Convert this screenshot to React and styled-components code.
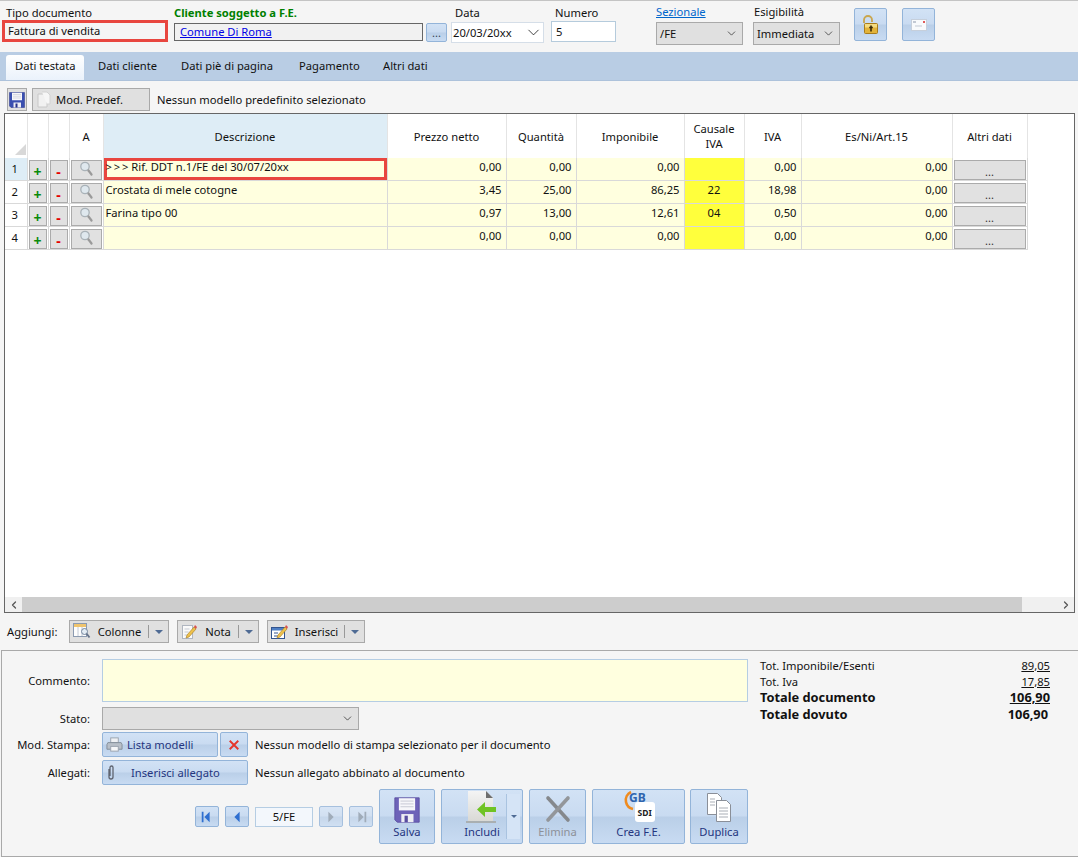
import React from "react";
import styled, { createGlobalStyle, css } from "styled-components";
import { ChevronDown, ChevronLeft, ChevronRight } from "lucide-react";

const GlobalStyle = createGlobalStyle`
  html, body {
    margin: 0;
    padding: 0;
    background: #f5f5f5;
  }
  body {
    font-family: "Noto Sans", "Liberation Sans", sans-serif;
    font-size: 11.2px;
    color: #111;
  }
  * { box-sizing: border-box; }
`;

const glass = css`
  background: linear-gradient(#d2e2f5 0%, #c9dbf1 48%, #bacfe8 52%, #c8dbf2 100%);
  border: 1px solid #93b4d9;
  border-radius: 2px;
`;

const Page = styled.div`
  width: 1078px;
  height: 857px;
  display: flex;
  flex-direction: column;
  border-top: 1px solid #c4c4c4;
  overflow: hidden;
`;

/* header */
const Header = styled.div`
  height: 51px;
  display: flex;
  align-items: flex-start;
  padding-left: 2px;
`;
const Field = styled.div`
  width: ${(p) => p.$w}px;
  margin-left: ${(p) => p.$ml || 0}px;
  padding-top: ${(p) => p.$pt ?? 5}px;
  display: flex;
  flex-direction: column;
`;
const FieldLabel = styled.div`
  height: 14px;
  line-height: 14px;
  padding-left: ${(p) => p.$pl || 0}px;
  margin-bottom: ${(p) => p.$mb || 0}px;
  white-space: nowrap;
  color: ${(p) => p.$color || "#111"};
  font-weight: ${(p) => (p.$bold ? 700 : 400)};
  ${(p) => p.$link && "text-decoration: underline;"}
`;
const MarkedBox = styled.div`
  height: 22px;
  border: 3px solid #e8463f;
  padding-left: 3px;
  line-height: 16px;
  background: #f5f5f5;
`;
const ClientRow = styled.div`
  display: flex;
  gap: 3px;
  margin-top: 3px;
`;
const ClientBox = styled.div`
  width: 249px;
  height: 18px;
  border: 1px solid #666;
  background: #f1f1f1;
  padding-left: 5px;
  line-height: 15px;
  color: #0000e6;
  text-decoration: underline;
`;
const DotsButton = styled.div`
  ${glass}
  width: 21px;
  height: 19px;
  text-align: center;
  line-height: 18px;
  color: #345;
`;
const DateBox = styled.div`
  height: 21px;
  margin-top: 2px;
  border: 1px solid #d5dee8;
  background: #fff;
  display: flex;
  align-items: center;
  justify-content: space-between;
  padding: 0 0 0 1px;
`;
const TextInput = styled.div`
  height: 21px;
  margin-top: 1px;
  border: 1px solid #b5cbdc;
  background: #fff;
  padding-left: 4px;
  line-height: 19px;
`;
const Select = styled.div`
  height: 23px;
  width: ${(p) => (p.$w ? p.$w + "px" : "auto")};
  border: 1px solid #a9a9a9;
  background: #e0e0e0;
  display: flex;
  align-items: center;
  justify-content: space-between;
  padding: 0 4px 0 3px;
`;
const SquareButton = styled.div`
  ${glass}
  width: 33px;
  height: 33px;
  margin-left: ${(p) => p.$ml}px;
  margin-top: 7px;
  display: flex;
  align-items: center;
  justify-content: center;
`;

/* tabs */
const TabBar = styled.div`
  height: 29px;
  flex: none;
  background: #b9cde4;
  border-bottom: 1px solid #adc2db;
  display: flex;
  align-items: flex-end;
  padding-left: 6px;
`;
const Tab = styled.div`
  height: 25px;
  width: ${(p) => p.$w}px;
  line-height: 21px;
  padding-left: 9px;
  white-space: nowrap;
  ${(p) =>
    p.$active &&
    css`
      background: linear-gradient(#fff, #eaf2fb);
      border-radius: 3px 3px 0 0;
      margin-right: 5px;
    `}
`;

/* model toolbar */
const ModelBar = styled.div`
  height: 32px;
  flex: none;
  display: flex;
  align-items: center;
  padding: 5px 0 0 7px;
`;
const GreyButton = styled.div`
  height: 23px;
  width: ${(p) => p.$w}px;
  margin-right: ${(p) => p.$mr || 0}px;
  border: 1px solid #a9a9a9;
  background: #e0e0e0;
  display: flex;
  align-items: center;
  white-space: nowrap;
  padding-left: ${(p) => p.$pl || 0}px;
  gap: ${(p) => p.$gap || 0}px;
`;

/* grid */
const GridFrame = styled.div`
  margin-left: 4px;
  width: 1071px;
  height: 500px;
  flex: none;
  border: 1px solid #666;
  background: #fff;
  display: flex;
  flex-direction: column;
`;
const GridBody = styled.div`
  flex: 1;
`;
const Table = styled.table`
  border-collapse: collapse;
  table-layout: fixed;
  width: 1022px;
`;
const Th = styled.th`
  height: 44px;
  padding: 0;
  font-weight: 400;
  line-height: 15px;
  text-align: center;
  background: ${(p) => (p.$active ? "#deedf6" : "#fff")};
  border-right: 1px solid #e4e4e4;
  position: relative;
`;
const HeaderCorner = styled.span`
  position: absolute;
  right: 1px;
  bottom: 3px;
  width: 0;
  height: 0;
  border-left: 11px solid transparent;
  border-bottom: 11px solid #d8d8d8;
`;
const Td = styled.td`
  height: 22px;
  padding: 0;
  vertical-align: top;
  border: 1px solid #d9d9d9;
  border-left: none;
  border-top: none;
  line-height: 17px;
  white-space: nowrap;
  overflow: hidden;
`;
const RowNumber = styled(Td)`
  text-align: center;
  line-height: 22px;
  padding-right: 2px;
  background: ${(p) => (p.$active ? "#deedf6" : "#fff")};
`;
const TextCell = styled(Td)`
  background: #ffffdf;
  padding-left: 2px;
  ${(p) => p.$marked && "box-shadow: inset 0 0 0 3px #e8463f;"}
`;
const NumberCell = styled(Td)`
  background: #ffffdf;
  text-align: right;
  padding-right: 4px;
`;
const CausaleCell = styled(Td)`
  background: #ffff3c;
  text-align: center;
`;
const ButtonCell = styled(Td)`
  background: #fff;
`;
const RowButton = styled.div`
  height: 20px;
  margin: 2px 1px 0;
  border: 1px solid #ababab;
  background: #e1e1e1;
  display: flex;
  justify-content: center;
  align-items: ${(p) => (p.$top ? "flex-start" : "center")};
  padding-top: ${(p) => (p.$top ? 0 : 3)}px;
  font-weight: ${(p) => (p.$sign ? 700 : 400)};
  font-size: ${(p) => (p.$sign ? 14 : 11)}px;
  color: ${(p) => p.$color || "#333"};
`;
const GridScroll = styled.div`
  height: 15px;
  flex: none;
  display: flex;
  align-items: center;
  background: #f0f0f0;
`;
const ScrollArrow = styled.div`
  width: 17px;
  display: flex;
  justify-content: center;
  color: #555;
`;
const ScrollThumb = styled.div`
  flex: 1;
  height: 15px;
  background: #cdcdcd;
  margin-right: 35px;
`;

/* add row */
const AddRow = styled.div`
  height: 37px;
  flex: none;
  display: flex;
  align-items: center;
  padding-left: 7px;
`;
const AddLabel = styled.span`
  width: 62px;
`;
const SplitButton = styled.div`
  height: 23px;
  width: ${(p) => p.$w}px;
  margin-right: 8px;
  border: 1px solid #a9a9a9;
  background: #e0e0e0;
  display: flex;
  align-items: center;
  padding-left: 3px;
`;
const SplitText = styled.span`
  flex: 1;
  text-align: center;
`;
const SplitArrow = styled.span`
  width: 20px;
  height: 13px;
  border-left: 1px solid #999;
  display: flex;
  align-items: center;
  justify-content: center;
  &::after {
    content: "";
    border-left: 4px solid transparent;
    border-right: 4px solid transparent;
    border-top: 4px solid #4f6b94;
  }
`;

/* bottom panel */
const Panel = styled.div`
  margin-left: 1px;
  width: 1077px;
  height: 207px;
  flex: none;
  border: 1px solid #a9a9a9;
  border-right: none;
  display: grid;
  grid-template-columns: 747px 1fr;
`;
const PanelLeft = styled.div`
  padding-top: 8px;
  display: flex;
  flex-direction: column;
`;
const FormRow = styled.div`
  display: grid;
  grid-template-columns: 88px 1fr;
  column-gap: 12px;
  align-items: center;
  margin-bottom: ${(p) => p.$mb || 0}px;
`;
const RowLabel = styled.div`
  text-align: right;
  white-space: nowrap;
`;
const Comment = styled.div`
  height: 43px;
  width: 646px;
  background: #ffffdf;
  border: 1px solid #b5cde3;
`;
const RowContent = styled.div`
  display: flex;
  align-items: center;
`;
const BlueButton = styled.div`
  ${glass}
  height: 25px;
  width: ${(p) => p.$w}px;
  margin-right: ${(p) => p.$mr || 0}px;
  display: flex;
  align-items: center;
  justify-content: ${(p) => (p.$center ? "center" : "flex-start")};
  padding-left: ${(p) => p.$pl || 0}px;
  gap: ${(p) => p.$gap || 0}px;
  color: #24357f;
  white-space: nowrap;
`;
const Hint = styled.span`
  margin-left: 7px;
  white-space: nowrap;
`;
const ActionRow = styled.div`
  display: flex;
  align-items: center;
  padding-left: 193px;
  margin-top: 4px;
`;
const NavButton = styled.div`
  ${glass}
  width: 24px;
  height: 21px;
  margin-right: 6px;
  display: flex;
  align-items: center;
  justify-content: center;
  opacity: ${(p) => (p.$off ? 0.8 : 1)};
`;
const PageBox = styled.div`
  width: 58px;
  height: 20px;
  margin-right: 6px;
  border: 1px solid #b5cde3;
  background: #f3f7fc;
  text-align: center;
  line-height: 18px;
`;
const BigButton = styled.div`
  ${glass}
  width: ${(p) => p.$w}px;
  height: 55px;
  margin-right: ${(p) => p.$mr ?? 6}px;
  display: flex;
  flex-direction: column;
  align-items: center;
  justify-content: flex-end;
  padding-bottom: 4px;
  position: relative;
  color: ${(p) => (p.$off ? "#8d9199" : "#24357f")};
`;
const BigIcon = styled.div`
  height: 35px;
  display: flex;
  align-items: flex-end;
  justify-content: center;
  margin-bottom: 1px;
`;
const DropPart = styled.div`
  position: absolute;
  right: 2px;
  top: 4px;
  bottom: 4px;
  width: 14px;
  background: #d5e4f6;
  border-left: 1px solid #a9c3e0;
  display: flex;
  align-items: center;
  justify-content: center;
  &::after {
    content: "";
    border-left: 3px solid transparent;
    border-right: 3px solid transparent;
    border-top: 3px solid #4f6b94;
  }
`;
const Totals = styled.div`
  padding: 6px 28px 0 11px;
`;
const TotalRow = styled.div`
  height: ${(p) => p.$h || 16}px;
  display: flex;
  justify-content: space-between;
  align-items: center;
  font-weight: ${(p) => (p.$bold ? 700 : 400)};
  font-size: ${(p) => (p.$bold ? "12.8px" : "inherit")};
`;
const TotalValue = styled.span`
  ${(p) => p.$line && "text-decoration: underline;"}
  padding-right: ${(p) => p.$pr || 0}px;
`;

/* icons */
const Floppy = ({ size = 16, body = "#3a4fb0", dark = "#24308a" }) => (
  <svg width={size} height={size} viewBox="0 0 32 32">
    <path d="M1 1h30v30H4l-3-3z" fill={body} stroke={dark} strokeWidth="1" />
    <rect x="6" y="1.5" width="20" height="15" fill="#f6f6fa" />
    <path d="M8 5h16M8 8.5h16M8 12h16" stroke="#c6c8d4" strokeWidth="1.2" />
    <rect x="9" y="21" width="15" height="10" fill="#eeeef4" />
    <rect x="13" y="23" width="4" height="8" fill={dark} />
  </svg>
);
const PageIcon = () => (
  <svg width="18" height="18" viewBox="0 0 18 18">
    <path d="M3 3h6l3 3v10H3z" fill="#f1f1f1" stroke="#c8c8c8" />
    <path d="M7 1h5l3 3v9h-3" fill="#f6f6f6" stroke="#d2d2d2" />
  </svg>
);
const Lens = () => (
  <svg width="15" height="15" viewBox="0 0 15 15">
    <circle cx="6" cy="5.5" r="4.2" fill="#dfe8ee" stroke="#a9b2b8" strokeWidth="1.3" />
    <path d="M9.5 9.5l3 4" stroke="#9a9a9a" strokeWidth="2.2" strokeLinecap="round" />
  </svg>
);
const Lock = () => (
  <svg width="18" height="20" viewBox="0 0 18 20">
    <path d="M3 8V5a4 4 0 0 1 8 0v2" fill="none" stroke="#c9a64e" strokeWidth="1.8" transform="translate(-1 0)" />
    <rect x="2.5" y="8.5" width="13" height="10" rx="1" fill="#e2b33a" stroke="#a87c1c" />
    <rect x="3" y="9" width="12" height="3.5" fill="#f5dc80" />
    <path d="M9 10.5v6M7.2 12.5h3.6" stroke="#3a2a08" strokeWidth="1.6" />
  </svg>
);
const Mail = () => (
  <svg width="16" height="12" viewBox="0 0 16 12">
    <rect x="0.5" y="0.5" width="15" height="11" fill="#f8fafc" stroke="#c6cfdb" />
    <rect x="2" y="2" width="3" height="2" fill="#c2c9d4" />
    <rect x="12" y="2" width="2" height="2" fill="#e05a5a" />
    <path d="M4 7h7" stroke="#c2c9d4" />
  </svg>
);
const ColumnsIcon = () => (
  <svg width="18" height="17" viewBox="0 0 18 17">
    <rect x="0.5" y="0.5" width="13" height="13" fill="#fdfdfd" stroke="#8b9ab0" />
    <rect x="1" y="1" width="12" height="3" fill="#efc46e" />
    <path d="M5 4v9M9 4v9" stroke="#c2cad6" />
    <circle cx="11.5" cy="8.5" r="3" fill="#e3ecf4" stroke="#75869e" />
    <path d="M13.5 10.5l3 4" stroke="#66748a" strokeWidth="1.8" />
  </svg>
);
const NoteIcon = () => (
  <svg width="17" height="17" viewBox="0 0 17 17">
    <rect x="1.5" y="2.5" width="10" height="13" fill="#fafafa" stroke="#b0b6c0" />
    <path d="M3.5 6h5M3.5 9h4M3.5 12h3" stroke="#c4c9d2" />
    <path d="M6 12l7-8 2 2-7 8-3 1z" fill="#eec14b" stroke="#a57a22" strokeWidth="0.6" />
    <path d="M13 4l1-2 2 2-1 2z" fill="#d9534f" />
  </svg>
);
const InsertIcon = () => (
  <svg width="18" height="17" viewBox="0 0 18 17">
    <rect x="0.5" y="4.5" width="13" height="11" fill="#fff" stroke="#34558f" />
    <rect x="1" y="5" width="12" height="2.5" fill="#4f7fc4" />
    <path d="M3 10h4M3 13h4" stroke="#34558f" />
    <path d="M7 12l7-8 2 2-7 8-3 1z" fill="#eec14b" stroke="#a57a22" strokeWidth="0.6" />
    <path d="M14 4l1-2 2 2-1 2z" fill="#d9534f" />
  </svg>
);
const Printer = () => (
  <svg width="17" height="17" viewBox="0 0 18 18">
    <rect x="5" y="2" width="8" height="5" fill="#eef0f3" stroke="#9aa3ae" />
    <path d="M2 7h14l1 2v5H1V9z" fill="#b8bfc8" stroke="#838d99" />
    <rect x="5" y="11" width="8" height="5" fill="#f6f7f9" stroke="#9aa3ae" />
  </svg>
);
const RedX = () => (
  <svg width="12" height="12" viewBox="0 0 14 14">
    <path d="M2 2l10 10M12 2L2 12" stroke="#e5352b" strokeWidth="2.2" />
  </svg>
);
const Clip = () => (
  <svg width="8" height="18" viewBox="0 0 8 18">
    <path
      d="M2 5v8a2 2 0 0 0 4 0V3.5a1.5 1.5 0 0 0-3 0V12"
      fill="none"
      stroke="#5f6470"
      strokeWidth="1.3"
    />
  </svg>
);
const NavIcon = ({ dir, edge, off }) => {
  const c = off ? "#8b9aab" : "#2f6fd0";
  const tri = dir === "left" ? "M11 2v12L5 8z" : "M5 2v12l6-6z";
  return (
    <svg width="14" height="16" viewBox="0 0 16 16">
      <path d={tri} fill={c} />
      {edge && <rect x={dir === "left" ? 2 : 12} y="2" width="2" height="12" fill={c} />}
    </svg>
  );
};
const IncludeIcon = () => (
  <svg width="32" height="33" viewBox="0 0 32 33">
    <defs>
      <linearGradient id="incPage" x1="0" y1="0" x2="0" y2="1">
        <stop offset="0" stopColor="#f4f4f4" />
        <stop offset="1" stopColor="#d9d9d5" />
      </linearGradient>
    </defs>
    <path d="M2 1h18l7 7v23H2z" fill="url(#incPage)" />
    <path d="M20 1v7h7z" fill="#6e6e6e" />
    <path d="M0 32h30" stroke="#a3a39e" strokeWidth="1.5" />
    <path d="M30 17h-11v-5L11 19.500 19 27v-5h11z" fill="#6fc324" />
  </svg>
);
const GreyX = () => (
  <svg width="26" height="28" viewBox="0 0 26 28">
    <path d="M3 3l20 22" stroke="#85888c" strokeWidth="3.6" strokeLinecap="round" />
    <path d="M23 3L3 25" stroke="#93969a" strokeWidth="3.6" strokeLinecap="round" />
  </svg>
);
const SdiLogo = () => (
  <svg width="34" height="34" viewBox="0 0 34 34">
    <path d="M9 3a9 9 0 0 0-5 10 9 9 0 0 0 7 7" fill="none" stroke="#ef8b1f" strokeWidth="2.6" />
    <text x="7" y="13" fontSize="12" fontWeight="700" fill="#2f64ad" fontFamily="Noto Sans">
      GB
    </text>
    <rect x="13" y="13" width="20" height="20" rx="3" fill="#fff" />
    <text x="15.500" y="27" fontSize="8.500" fontWeight="700" fill="#222" fontFamily="Noto Sans">
      SDI
    </text>
  </svg>
);
const DuplicateIcon = () => (
  <svg width="26" height="31" viewBox="0 0 26 31">
    <path d="M1.500 1.500h10l4 4v17h-14z" fill="#fff" stroke="#8a8f98" />
    <path d="M10.500 8.500h10l4 4v17h-14z" fill="#fff" stroke="#8a8f98" />
    <path d="M13 16h9M13 19h9M13 22h9M13 25h9M4 7h5M4 10h5M4 13h5" stroke="#a9aeb6" />
  </svg>
);

const rows = [
  { n: 1, d: ">\u2009>\u2009> Rif. DDT n.1/FE del 30/07/20xx", p: "0,00", q: "0,00", i: "0,00", c: "", v: "0,00", marked: true },
  { n: 2, d: "Crostata di mele cotogne", p: "3,45", q: "25,00", i: "86,25", c: "22", v: "18,98" },
  { n: 3, d: "Farina tipo 00", p: "0,97", q: "13,00", i: "12,61", c: "04", v: "0,50" },
  { n: 4, d: "", p: "0,00", q: "0,00", i: "0,00", c: "", v: "0,00" },
];

const widths = [22, 21, 21, 34, 284, 119, 70, 108, 60, 57, 151, 75];

export default function App() {
  return (
    <Page>
      <GlobalStyle />
      <Header>
        <Field $w={166}>
          <FieldLabel $pl={4}>Tipo documento</FieldLabel>
          <MarkedBox>Fattura di vendita</MarkedBox>
        </Field>
        <Field $w={273} $ml={6}>
          <FieldLabel $bold $color="#008000">Cliente soggetto a F.E.</FieldLabel>
          <ClientRow>
            <ClientBox>Comune Di Roma</ClientBox>
            <DotsButton>...</DotsButton>
          </ClientRow>
        </Field>
        <Field $w={93} $ml={4}>
          <FieldLabel $pl={4}>Data</FieldLabel>
          <DateBox>
            20/03/20xx
            <ChevronDown size={19} strokeWidth={1} />
          </DateBox>
        </Field>
        <Field $w={65} $ml={7}>
          <FieldLabel $pl={4}>Numero</FieldLabel>
          <TextInput>5</TextInput>
        </Field>
        <Field $w={87} $ml={40} $pt={4}>
          <FieldLabel $link $color="#0066cc" $mb={3}>Sezionale</FieldLabel>
          <Select>
            /FE
            <ChevronDown size={13} strokeWidth={1.2} />
          </Select>
        </Field>
        <Field $w={87} $ml={10} $pt={4}>
          <FieldLabel $pl={1} $mb={3}>Esigibilità</FieldLabel>
          <Select>
            Immediata
            <ChevronDown size={13} strokeWidth={1.2} />
          </Select>
        </Field>
        <SquareButton $ml={14}><Lock /></SquareButton>
        <SquareButton $ml={15}><Mail /></SquareButton>
      </Header>

      <TabBar>
        <Tab $active $w={78}>Dati testata</Tab>
        <Tab $w={83}>Dati cliente</Tab>
        <Tab $w={118}>Dati piè di pagina</Tab>
        <Tab $w={84}>Pagamento</Tab>
        <Tab $w={70}>Altri dati</Tab>
      </TabBar>

      <ModelBar>
        <GreyButton $w={20} $mr={5} $pl={1}><Floppy size={16} /></GreyButton>
        <GreyButton $w={118} $mr={7} $pl={2} $gap={3}>
          <PageIcon />
          Mod. Predef.
        </GreyButton>
        <span>Nessun modello predefinito selezionato</span>
      </ModelBar>

      <GridFrame>
        <GridBody>
          <Table>
            <colgroup>
              {widths.map((w, i) => (
                <col key={i} style={{ width: w }} />
              ))}
            </colgroup>
            <thead>
              <tr>
                <Th><HeaderCorner /></Th>
                <Th />
                <Th />
                <Th>A</Th>
                <Th $active>Descrizione</Th>
                <Th>Prezzo netto</Th>
                <Th>Quantità</Th>
                <Th>Imponibile</Th>
                <Th>Causale<br />IVA</Th>
                <Th>IVA</Th>
                <Th>Es/Ni/Art.15</Th>
                <Th>Altri dati</Th>
              </tr>
            </thead>
            <tbody>
              {rows.map((r) => (
                <tr key={r.n}>
                  <RowNumber $active={r.marked}>{r.n}</RowNumber>
                  <ButtonCell><RowButton $sign $color="#0a8a0a">+</RowButton></ButtonCell>
                  <ButtonCell><RowButton $sign $color="#e60000">-</RowButton></ButtonCell>
                  <ButtonCell><RowButton $top><Lens /></RowButton></ButtonCell>
                  <TextCell $marked={r.marked}>{r.d}</TextCell>
                  <NumberCell>{r.p}</NumberCell>
                  <NumberCell>{r.q}</NumberCell>
                  <NumberCell>{r.i}</NumberCell>
                  <CausaleCell>{r.c}</CausaleCell>
                  <NumberCell>{r.v}</NumberCell>
                  <NumberCell>0,00</NumberCell>
                  <ButtonCell><RowButton>...</RowButton></ButtonCell>
                </tr>
              ))}
            </tbody>
          </Table>
        </GridBody>
        <GridScroll>
          <ScrollArrow><ChevronLeft size={12} strokeWidth={2.5} /></ScrollArrow>
          <ScrollThumb />
          <ScrollArrow><ChevronRight size={12} strokeWidth={2.5} /></ScrollArrow>
        </GridScroll>
      </GridFrame>

      <AddRow>
        <AddLabel>Aggiungi:</AddLabel>
        <SplitButton $w={100}><ColumnsIcon /><SplitText>Colonne</SplitText><SplitArrow /></SplitButton>
        <SplitButton $w={82}><NoteIcon /><SplitText>Nota</SplitText><SplitArrow /></SplitButton>
        <SplitButton $w={98}><InsertIcon /><SplitText>Inserisci</SplitText><SplitArrow /></SplitButton>
      </AddRow>

      <Panel>
        <PanelLeft>
          <FormRow $mb={5}>
            <RowLabel>Commento:</RowLabel>
            <Comment />
          </FormRow>
          <FormRow $mb={2}>
            <RowLabel>Stato:</RowLabel>
            <Select $w={257}>
              <span />
              <ChevronDown size={13} strokeWidth={1.2} />
            </Select>
          </FormRow>
          <FormRow $mb={3}>
            <RowLabel>Mod. Stampa:</RowLabel>
            <RowContent>
              <BlueButton $w={116} $mr={2} $pl={3} $gap={4}>
                <Printer />
                Lista modelli
              </BlueButton>
              <BlueButton $w={28} $center><RedX /></BlueButton>
              <Hint>Nessun modello di stampa selezionato per il documento</Hint>
            </RowContent>
          </FormRow>
          <FormRow>
            <RowLabel>Allegati:</RowLabel>
            <RowContent>
              <BlueButton $w={146} $pl={4} $gap={16}>
                <Clip />
                Inserisci allegato
              </BlueButton>
              <Hint>Nessun allegato abbinato al documento</Hint>
            </RowContent>
          </FormRow>
          <ActionRow>
            <NavButton><NavIcon dir="left" edge /></NavButton>
            <NavButton><NavIcon dir="left" /></NavButton>
            <PageBox>5/FE</PageBox>
            <NavButton $off><NavIcon dir="right" off /></NavButton>
            <NavButton $off><NavIcon dir="right" edge off /></NavButton>
            <BigButton $w={56}>
              <BigIcon><Floppy size={26} body="#6d62b8" dark="#574c9f" /></BigIcon>
              Salva
            </BigButton>
            <BigButton $w={82}>
              <BigIcon><IncludeIcon /></BigIcon>
              Includi
              <DropPart />
            </BigButton>
            <BigButton $w={57} $off>
              <BigIcon><GreyX /></BigIcon>
              Elimina
            </BigButton>
            <BigButton $w={93} $mr={5}>
              <BigIcon><SdiLogo /></BigIcon>
              Crea F.E.
            </BigButton>
            <BigButton $w={58} $mr={0}>
              <BigIcon><DuplicateIcon /></BigIcon>
              Duplica
            </BigButton>
          </ActionRow>
        </PanelLeft>
        <Totals>
          <TotalRow>Tot. Imponibile/Esenti<TotalValue $line>89,05</TotalValue></TotalRow>
          <TotalRow>Tot. Iva<TotalValue $line>17,85</TotalValue></TotalRow>
          <TotalRow $bold>Totale documento<TotalValue $line>106,90</TotalValue></TotalRow>
          <TotalRow $bold $h={18}>Totale dovuto<TotalValue $pr={2}>106,90</TotalValue></TotalRow>
        </Totals>
      </Panel>
    </Page>
  );
}
